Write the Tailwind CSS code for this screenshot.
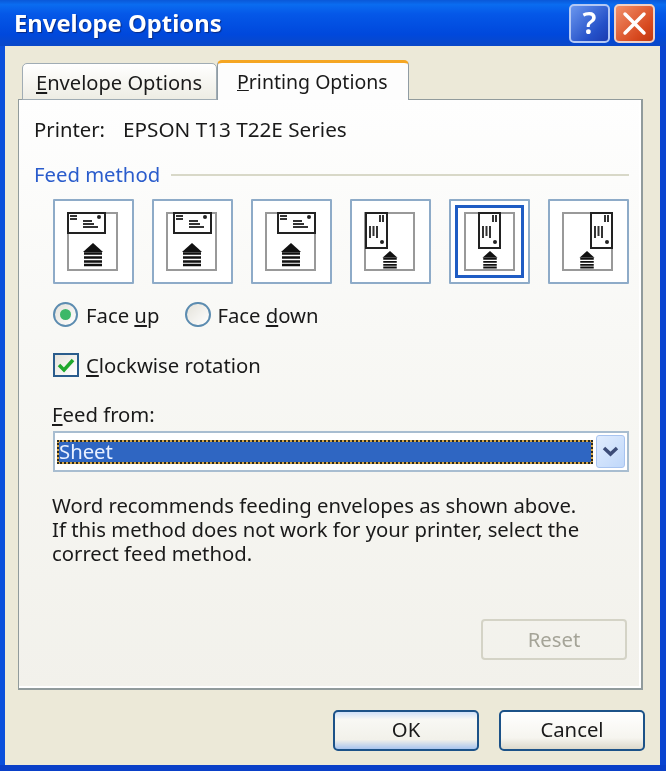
<!DOCTYPE html>
<html lang="en">
<head>
  <meta charset="UTF-8" />
  <title>Envelope Options</title>
  <script src="https://cdn.jsdelivr.net/npm/@tailwindcss/browser@4"></script>
</head>
<body class="bg-white">
  <svg class="hidden" xmlns="http://www.w3.org/2000/svg">
    <symbol id="arrow-big" viewBox="0 0 20 24">
      <path d="M10 0L20 9H0z" fill="#111" />
      <path d="M1 10.500h18M1 14.500h18M1 18.500h18M1 22h18" stroke="#111" stroke-width="2.600" />
    </symbol>
    <symbol id="env-h" viewBox="0 0 39 22">
      <rect x="1" y="1" width="37" height="20" fill="#fff" stroke="#222" stroke-width="2" />
      <path d="M3 4h7M3 7h7M16 9h9M16 12h11M16 15h15" stroke="#333" stroke-width="2" />
      <circle cx="32" cy="5" r="2" fill="#222" />
    </symbol>
    <symbol id="env-v" viewBox="0 0 23 37">
      <rect x="1" y="1" width="21" height="35" fill="#fff" stroke="#222" stroke-width="2" />
      <path d="M15 10V3M18 10V3M5 26V14M8.500 24V14M12 26V14" stroke="#333" stroke-width="2" />
      <circle cx="17" cy="30" r="2" fill="#222" />
    </symbol>
  </svg>

  <div class="w-[666px] h-[771px] flex flex-col blur-[0.6px] font-['Noto_Sans',sans-serif] text-[#1a1a1a] text-[20.300px] leading-6">
    <!-- barre de titre -->
    <div class="h-[46px] shrink-0 flex items-center justify-between pl-[14px] pr-[11px] bg-[linear-gradient(180deg,#0a58d8_0%,#0a6cf0_10%,#0558e8_30%,#0048dc_75%,#0a48c8_100%)]">
      <span class="text-white font-bold text-[23.800px] [text-shadow:1px_1px_1px_#0a2a80]">Envelope Options</span>
      <div class="flex gap-1">
        <div class="w-[41px] h-[39px] rounded-[5px] border-2 border-[#b4c8f4] bg-[linear-gradient(135deg,#6a96ee,#2450c8_70%,#1c3cb0)] flex items-center justify-center text-white text-[30px] font-semibold">?</div>
        <div class="w-[41px] h-[39px] rounded-[5px] border-2 border-[#f0d0c4] bg-[linear-gradient(135deg,#f0906a,#d84a20_70%,#c03810)] flex items-center justify-center">
          <svg width="27" height="27" viewBox="0 0 27 27" fill="none"><path d="M4 4l19 19M23 4L4 23" stroke="#fff" stroke-width="3.500" stroke-linecap="round" /></svg>
        </div>
      </div>
    </div>

    <!-- zone client -->
    <div class="flex-1 flex flex-col bg-[#ece9d8] ml-[5px] mr-[6px] pl-[13px] pr-[17px] pt-[14px]">

      <!-- onglets -->
      <div class="h-[40px] flex items-end pl-1 shrink-0 relative z-10 -mb-px">
        <div class="w-[195px] h-[37px] rounded-t-[5px] border border-[#a0acb4] bg-[linear-gradient(180deg,#ffffff,#eeede4)] flex items-center pl-[13px] pt-[3px] text-[20.100px]">
          <span><span class="underline">E</span>nvelope Options</span>
        </div>
        <div class="w-[192px] h-[40px] rounded-t-[5px] border-x border-[#909ca4] border-t-[3px] border-t-[#f5a623] bg-[#fdfdfd] flex items-center pl-[19px] text-[19.500px]">
          <span><span class="underline">P</span>rinting Options</span>
        </div>
      </div>

      <!-- panneau -->
      <div class="h-[591px] shrink-0 border border-[#919b9c] border-r-2 border-b-2 shadow-[inset_-2px_-2px_0_#ffffff] bg-[linear-gradient(180deg,#fefefe,#f8f8f5_40%,#f2f1eb)] pl-[15px] pr-[12px] pt-[18px]">
        <div class="flex h-6 items-center pb-[2px]">
          <span class="w-[89px]">Printer:</span>
          <span class="text-[20.700px]">EPSON T13 T22E Series</span>
        </div>

        <div class="flex h-6 items-center mt-[21px] gap-[11px]">
          <span class="text-[#2a5ccc] -translate-y-px">Feed method</span>
          <div class="flex-1 h-0.5 bg-[#d8d8c8]"></div>
        </div>

        <div class="flex gap-[18px] ml-[19px] mt-3">
          <div class="w-[81px] h-[85px] border-2 border-[#8eabc8] bg-white rounded-[1px] relative">
            <svg class="absolute left-3 top-[11px]" width="51" height="59" viewBox="0 0 51 59"><rect x="1" y="1" width="49" height="57" fill="#fff" stroke="#999" stroke-width="2" /><use href="#env-h" x="0" y="0" width="39" height="22" /><use href="#arrow-big" x="16" y="31" width="20" height="24" /></svg>
          </div>
          <div class="w-[81px] h-[85px] border-2 border-[#8eabc8] bg-white rounded-[1px] relative">
            <svg class="absolute left-3 top-[11px]" width="51" height="59" viewBox="0 0 51 59"><rect x="1" y="1" width="49" height="57" fill="#fff" stroke="#999" stroke-width="2" /><use href="#env-h" x="7" y="0" width="39" height="22" /><use href="#arrow-big" x="16" y="31" width="20" height="24" /></svg>
          </div>
          <div class="w-[81px] h-[85px] border-2 border-[#8eabc8] bg-white rounded-[1px] relative">
            <svg class="absolute left-3 top-[11px]" width="51" height="59" viewBox="0 0 51 59"><rect x="1" y="1" width="49" height="57" fill="#fff" stroke="#999" stroke-width="2" /><use href="#env-h" x="12" y="0" width="39" height="22" /><use href="#arrow-big" x="16" y="31" width="20" height="24" /></svg>
          </div>
          <div class="w-[81px] h-[85px] border-2 border-[#8eabc8] bg-white rounded-[1px] relative">
            <svg class="absolute left-3 top-[11px]" width="51" height="59" viewBox="0 0 51 59"><rect x="1" y="1" width="49" height="57" fill="#fff" stroke="#999" stroke-width="2" /><use href="#env-v" x="1" y="0" width="23" height="37" /><use href="#arrow-big" x="18" y="39" width="16" height="18" /></svg>
          </div>
          <div class="w-[81px] h-[85px] border-2 border-[#8eabc8] bg-white rounded-[1px] relative">
            <div class="absolute left-[4px] top-[4px] w-[69px] h-[73px] border-[3px] border-[#1f5cc4]"></div>
            <svg class="absolute left-[13px] top-[11px]" width="51" height="59" viewBox="0 0 51 59"><rect x="1" y="1" width="49" height="57" fill="#fff" stroke="#999" stroke-width="2" /><use href="#env-v" x="14" y="0" width="23" height="37" /><use href="#arrow-big" x="18" y="39" width="16" height="18" /></svg>
          </div>
          <div class="w-[81px] h-[85px] border-2 border-[#8eabc8] bg-white rounded-[1px] relative">
            <svg class="absolute left-3 top-[11px]" width="51" height="59" viewBox="0 0 51 59"><rect x="1" y="1" width="49" height="57" fill="#fff" stroke="#999" stroke-width="2" /><use href="#env-v" x="28" y="0" width="23" height="37" /><use href="#arrow-big" x="17" y="39" width="16" height="18" /></svg>
          </div>
        </div>

        <!-- orientation -->
        <div class="flex items-center h-[25px] ml-[19px] mt-[18px]">
          <div class="w-[25px] h-[25px] rounded-full border-2 border-[#5c8cb0] bg-[linear-gradient(135deg,#e4e2da,#ffffff)] flex items-center justify-center">
            <div class="w-[11px] h-[11px] rounded-full bg-[#3cb868]"></div>
          </div>
          <span class="ml-2 pt-px">Face <span class="underline">u</span>p</span>
          <div class="w-[26px] h-[25px] ml-[26px] rounded-full border-2 border-[#5c8cb0] bg-[linear-gradient(135deg,#e4e2da,#ffffff)]"></div>
          <span class="ml-[6px] pt-px">Face <span class="underline">d</span>own</span>
        </div>

        <div class="flex items-center h-6 ml-[19px] mt-[26px]">
          <div class="w-[26px] h-6 border-2 border-[#2a5c8c] bg-[linear-gradient(135deg,#e6e4dc,#ffffff)] flex items-center justify-center">
            <svg width="18" height="15" viewBox="0 0 18 15" fill="none"><path d="M2 7l5 5 9-10" stroke="#1fa82c" stroke-width="3.500" /></svg>
          </div>
          <span class="ml-[7px]"><span class="underline">C</span>lockwise rotation</span>
        </div>

        <div class="h-6 ml-[18px] mt-[26px] -translate-y-px"><span class="underline">F</span>eed from:</div>

        <!-- liste -->
        <div class="h-[41px] ml-[19px] mt-1 border-2 border-[#a8bdd0] bg-white flex items-center justify-between pl-[2px] pr-[2px]">
          <div class="w-[536px] h-6 bg-[#d8a848]">
            <div class="h-6 bg-[#2f66c2] bg-clip-padding border-2 border-dotted border-[#2a2a20] text-[#e8f0ff] flex items-center leading-none">Sheet</div>
          </div>
          <div class="w-[29px] h-[33px] rounded-[3px] border border-[#a8c4f0] bg-[linear-gradient(135deg,#e0ecfe,#c0d8fa)] flex items-center justify-center">
            <svg width="17" height="11" viewBox="0 0 17 11" fill="none"><path d="M2 2l6.500 6L15 2" stroke="#3c4c78" stroke-width="3.500" /></svg>
          </div>
        </div>

        <p class="ml-[18px] mt-[22px] -translate-y-px">Word recommends feeding envelopes as shown above.<br />If this method does not work for your printer, select the<br />correct feed method.</p>

        <div class="flex justify-end mt-[53px] mr-[2px]">
          <div class="w-[146px] h-[41px] rounded-[4px] border-2 border-[#d4d3c6] flex items-center justify-center text-[#a5a498] pb-[2px]">Reset</div>
        </div>
      </div>

      <!-- boutons -->
      <div class="flex justify-end gap-5 mt-5 -mr-[2px]">
        <div class="w-[146px] h-[41px] rounded-[5px] border-2 border-[#1c5288] bg-[linear-gradient(180deg,#cfe0f8,#f8f8f4_20%,#f2f1ea_75%,#a8c4ee)] flex items-center justify-center pb-[3px]">OK</div>
        <div class="w-[146px] h-[41px] rounded-[5px] border-2 border-[#1c5288] bg-[linear-gradient(180deg,#ffffff,#f6f5ef_70%,#dcd9cc)] flex items-center justify-center pb-[3px]">Cancel</div>
      </div>
    </div>
  </div>

  <!-- bords bleus de la fenêtre -->
  <div class="absolute left-0 top-[46px] w-[5px] h-[725px] bg-[#0a50dc]"></div>
  <div class="absolute left-[660px] top-[46px] w-[6px] h-[725px] bg-[#0a44d0]"></div>
  <div class="absolute left-0 top-[765px] w-[666px] h-[6px] bg-[#0a40c8]"></div>
</body>
</html>
